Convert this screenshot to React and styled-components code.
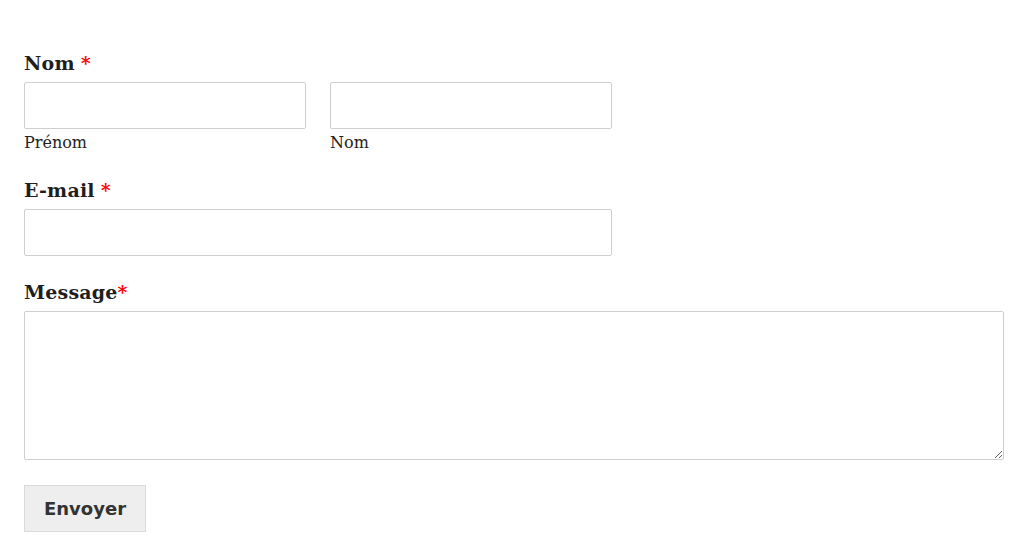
import styled, { createGlobalStyle } from 'styled-components'

const GlobalStyle = createGlobalStyle`
  body {
    margin: 0;
    background: #fff;
  }
`;

const Form = styled.form`
  display: flex;
  flex-direction: column;
  padding: 48px 16px 0 24px;
  font-family: "DejaVu Serif", "Liberation Serif", serif;
  color: #1e1e1e;
`;

const Field = styled.div`
  display: flex;
  flex-direction: column;
  margin-bottom: ${(p) => p.$gap || 20}px;
`;

const Label = styled.label`
  font-size: 19px;
  font-weight: 700;
  line-height: 30px;
  margin-bottom: 4px;
  letter-spacing: 0.2px;
`;

const Star = styled.span`
  color: #f00;
  margin-left: ${(p) => (p.$tight ? 0 : 6)}px;
`;

const Row = styled.div`
  display: flex;
  gap: 24px;
`;

const Col = styled.div`
  display: flex;
  flex-direction: column;
  width: 282px;
`;

const Input = styled.input`
  box-sizing: border-box;
  width: ${(p) => p.$width || 282}px;
  height: 47px;
  border: 1px solid #cfcfcf;
  border-radius: 2px;
  background: #fff;
  outline: none;
  font-size: 16px;
  padding: 0 12px;
`;

const SubLabel = styled.span`
  font-size: 16px;
  line-height: 22px;
  margin-top: 3px;
  color: #222;
`;

const TextArea = styled.textarea`
  box-sizing: border-box;
  width: 980px;
  height: 149px;
  border: 1px solid #cfcfcf;
  border-radius: 2px;
  outline: none;
  resize: vertical;
  font-size: 16px;
  padding: 8px 12px;
`;

const Button = styled.button`
  box-sizing: border-box;
  align-self: flex-start;
  width: 122px;
  height: 47px;
  background: #eeeeee;
  border: 1px solid #dadada;
  border-radius: 0;
  font-family: "DejaVu Sans", "Liberation Sans", sans-serif;
  font-size: 18px;
  font-weight: 700;
  color: #333;
  cursor: pointer;
`;

export default function App() {
  return (
    <>
      <GlobalStyle />
      <Form onSubmit={(e) => e.preventDefault()}>
        <Field $gap={21}>
          <Label>
            Nom<Star>*</Star>
          </Label>
          <Row>
            <Col>
              <Input type="text" />
              <SubLabel>Prénom</SubLabel>
            </Col>
            <Col>
              <Input type="text" />
              <SubLabel>Nom</SubLabel>
            </Col>
          </Row>
        </Field>
        <Field $gap={21}>
          <Label>
            E-mail<Star>*</Star>
          </Label>
          <Input type="email" $width={588} />
        </Field>
        <Field $gap={25}>
          <Label>
            Message<Star $tight>*</Star>
          </Label>
          <TextArea />
        </Field>
        <Button type="submit">Envoyer</Button>
      </Form>
    </>
  );
}
